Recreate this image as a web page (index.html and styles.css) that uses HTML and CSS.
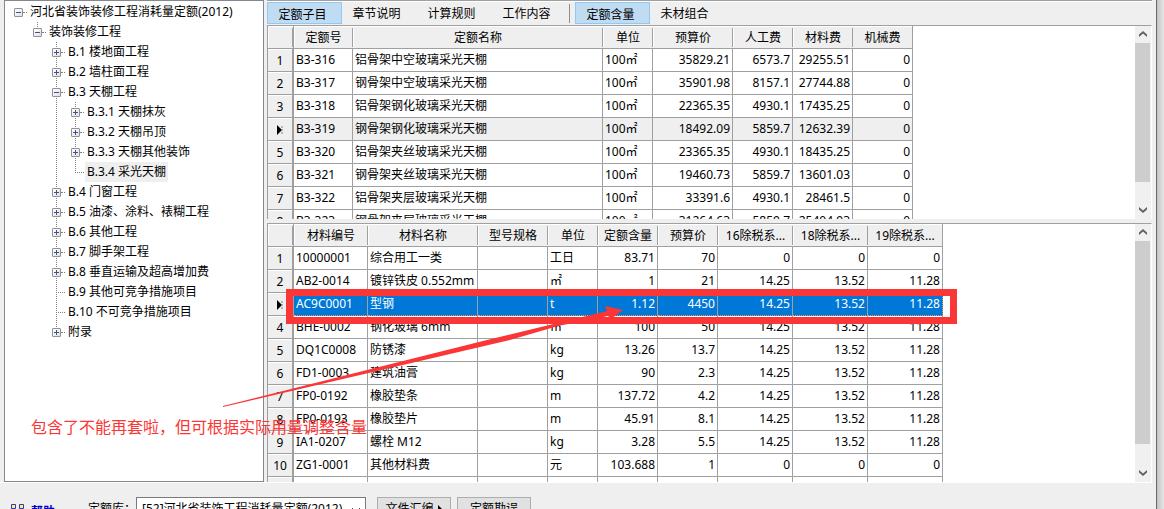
FILE: index.html
```html
<!DOCTYPE html>
<html lang="zh-CN">
<head>
<meta charset="utf-8">
<title>定额查询</title>
<link rel="stylesheet" href="styles.css">
</head>
<body>
<div class="window">
<div class="main">
<nav class="tree" aria-label="定额目录">
<ul class="branch root">
<li class="last"><div class="node"><button class="toggle minus" aria-label="折叠"></button><span class="name">河北省装饰装修工程消耗量定额(2012)</span></div>
<ul class="branch">
<li class="last"><div class="node"><button class="toggle minus" aria-label="折叠"></button><span class="name">装饰装修工程</span></div>
<ul class="branch">
<li><div class="node"><button class="toggle" aria-label="展开"></button><span class="name">B.1 楼地面工程</span></div></li>
<li><div class="node"><button class="toggle" aria-label="展开"></button><span class="name">B.2 墙柱面工程</span></div></li>
<li><div class="node"><button class="toggle minus" aria-label="折叠"></button><span class="name">B.3 天棚工程</span></div>
<ul class="branch">
<li><div class="node"><button class="toggle" aria-label="展开"></button><span class="name">B.3.1 天棚抹灰</span></div></li>
<li><div class="node"><button class="toggle" aria-label="展开"></button><span class="name">B.3.2 天棚吊顶</span></div></li>
<li><div class="node"><button class="toggle" aria-label="展开"></button><span class="name">B.3.3 天棚其他装饰</span></div></li>
<li class="last"><div class="node leaf"><span class="name current">B.3.4 采光天棚</span></div></li>
</ul></li>
<li><div class="node"><button class="toggle" aria-label="展开"></button><span class="name">B.4 门窗工程</span></div></li>
<li><div class="node"><button class="toggle" aria-label="展开"></button><span class="name">B.5 油漆、涂料、裱糊工程</span></div></li>
<li><div class="node"><button class="toggle" aria-label="展开"></button><span class="name">B.6 其他工程</span></div></li>
<li><div class="node"><button class="toggle" aria-label="展开"></button><span class="name">B.7 脚手架工程</span></div></li>
<li><div class="node"><button class="toggle" aria-label="展开"></button><span class="name">B.8 垂直运输及超高增加费</span></div></li>
<li><div class="node leaf"><span class="name">B.9 其他可竞争措施项目</span></div></li>
<li><div class="node leaf"><span class="name">B.10 不可竞争措施项目</span></div></li>
<li class="last"><div class="node"><button class="toggle" aria-label="展开"></button><span class="name">附录</span></div></li>
</ul></li>
</ul></li>
</ul>
</nav>
<section class="content">
<div class="tabs">
<button class="tab active">定额子目</button><button class="tab">章节说明</button><button class="tab">计算规则</button><button class="tab">工作内容</button><span class="separator"></span><button class="tab active">定额含量</button><button class="tab">未材组合</button>
</div>
<div class="panel upper">
<div class="viewport">
<table class="grid">
<colgroup><col class="w26"><col class="w59"><col class="w250"><col class="w50"><col class="w80"><col class="w60"><col class="w60"><col class="w60"></colgroup>
<thead><tr><th></th><th>定额号</th><th>定额名称</th><th>单位</th><th>预算价</th><th>人工费</th><th>材料费</th><th>机械费</th></tr></thead>
<tbody>
<tr><th>1</th><td>B3-316</td><td>铝骨架中空玻璃采光天棚</td><td>100㎡</td><td class="num">35829.21</td><td class="num">6573.7</td><td class="num">29255.51</td><td class="num">0</td></tr>
<tr><th>2</th><td>B3-317</td><td>钢骨架中空玻璃采光天棚</td><td>100㎡</td><td class="num">35901.98</td><td class="num">8157.1</td><td class="num">27744.88</td><td class="num">0</td></tr>
<tr><th>3</th><td>B3-318</td><td>铝骨架钢化玻璃采光天棚</td><td>100㎡</td><td class="num">22365.35</td><td class="num">4930.1</td><td class="num">17435.25</td><td class="num">0</td></tr>
<tr class="marked"><th><svg class="pointer" viewBox="0 0 6 10"><path d="M0 0 5 5 0 10Z"/><path class="ghost" d="M5 1V9"/></svg></th><td>B3-319</td><td>钢骨架钢化玻璃采光天棚</td><td>100㎡</td><td class="num">18492.09</td><td class="num">5859.7</td><td class="num">12632.39</td><td class="num">0</td></tr>
<tr><th>5</th><td>B3-320</td><td>铝骨架夹丝玻璃采光天棚</td><td>100㎡</td><td class="num">23365.35</td><td class="num">4930.1</td><td class="num">18435.25</td><td class="num">0</td></tr>
<tr><th>6</th><td>B3-321</td><td>钢骨架夹丝玻璃采光天棚</td><td>100㎡</td><td class="num">19460.73</td><td class="num">5859.7</td><td class="num">13601.03</td><td class="num">0</td></tr>
<tr><th>7</th><td>B3-322</td><td>铝骨架夹层玻璃采光天棚</td><td>100㎡</td><td class="num">33391.6</td><td class="num">4930.1</td><td class="num">28461.5</td><td class="num">0</td></tr>
<tr><th>8</th><td>B3-323</td><td>钢骨架夹层玻璃采光天棚</td><td>100㎡</td><td class="num">31264.63</td><td class="num">5859.7</td><td class="num">25404.93</td><td class="num">0</td></tr>
</tbody>
</table>
</div>
<div class="scrollbar"><svg class="arrow" viewBox="0 0 16 17"><path d="M4 11V8.500L8 5 12 8.500V11L8 7.500Z"/></svg><div class="track"><div class="thumb thumb-upper"></div></div><svg class="arrow" viewBox="0 0 16 17"><path d="M4 6V8.500L8 12 12 8.500V6L8 9.500Z"/></svg></div>
</div>
<div class="panel lower">
<div class="viewport">
<table class="grid">
<colgroup><col class="w26"><col class="w74"><col class="w110"><col class="w70"><col class="w50"><col class="w60"><col class="w60"><col class="w75"><col class="w75"><col class="w75"></colgroup>
<thead><tr><th></th><th>材料编号</th><th>材料名称</th><th>型号规格</th><th>单位</th><th>定额含量</th><th>预算价</th><th>16除税系...</th><th>18除税系...</th><th>19除税系...</th></tr></thead>
<tbody>
<tr><th>1</th><td>10000001</td><td>综合用工一类</td><td></td><td>工日</td><td class="num">83.71</td><td class="num">70</td><td class="num">0</td><td class="num">0</td><td class="num">0</td></tr>
<tr><th>2</th><td>AB2-0014</td><td>镀锌铁皮 0.552mm</td><td></td><td>㎡</td><td class="num">1</td><td class="num">21</td><td class="num">14.25</td><td class="num">13.52</td><td class="num">11.28</td></tr>
<tr class="selected"><th><svg class="pointer" viewBox="0 0 6 10"><path d="M0 0 5 5 0 10Z"/><path class="ghost" d="M5 1V9"/></svg></th><td>AC9C0001</td><td>型钢</td><td></td><td>t</td><td class="num">1.12</td><td class="num">4450</td><td class="num">14.25</td><td class="num">13.52</td><td class="num">11.28</td></tr>
<tr><th>4</th><td>BHE-0002</td><td>钢化玻璃 6mm</td><td></td><td>㎡</td><td class="num">100</td><td class="num">50</td><td class="num">14.25</td><td class="num">13.52</td><td class="num">11.28</td></tr>
<tr><th>5</th><td>DQ1C0008</td><td>防锈漆</td><td></td><td>kg</td><td class="num">13.26</td><td class="num">13.7</td><td class="num">14.25</td><td class="num">13.52</td><td class="num">11.28</td></tr>
<tr><th>6</th><td>FD1-0003</td><td>建筑油膏</td><td></td><td>kg</td><td class="num">90</td><td class="num">2.3</td><td class="num">14.25</td><td class="num">13.52</td><td class="num">11.28</td></tr>
<tr><th>7</th><td>FP0-0192</td><td>橡胶垫条</td><td></td><td>m</td><td class="num">137.72</td><td class="num">4.2</td><td class="num">14.25</td><td class="num">13.52</td><td class="num">11.28</td></tr>
<tr><th>8</th><td>FP0-0193</td><td>橡胶垫片</td><td></td><td>m</td><td class="num">45.91</td><td class="num">8.1</td><td class="num">14.25</td><td class="num">13.52</td><td class="num">11.28</td></tr>
<tr><th>9</th><td>IA1-0207</td><td>螺栓 M12</td><td></td><td>kg</td><td class="num">3.28</td><td class="num">5.5</td><td class="num">14.25</td><td class="num">13.52</td><td class="num">11.28</td></tr>
<tr><th>10</th><td>ZG1-0001</td><td>其他材料费</td><td></td><td>元</td><td class="num">103.688</td><td class="num">1</td><td class="num">0</td><td class="num">0</td><td class="num">0</td></tr>
<tr><th></th><td></td><td></td><td></td><td></td><td></td><td></td><td></td><td></td><td></td></tr>
</tbody>
</table>
</div>
<div class="scrollbar"><svg class="arrow" viewBox="0 0 16 17"><path d="M4 11V8.500L8 5 12 8.500V11L8 7.500Z"/></svg><div class="track"><div class="thumb thumb-lower"></div></div><svg class="arrow" viewBox="0 0 16 17"><path d="M4 6V8.500L8 12 12 8.500V6L8 9.500Z"/></svg></div>
</div>
</section>
</div>
<footer class="footer">
<a class="help" href="#"><svg class="help-icon" viewBox="0 0 15 15"><path class="dot" d="M2 2H6V6H2ZM10 2H14V6H10ZM2 10H6V14H2ZM10 10H14V14H10Z"/><path d="M1.500 1.500H5.500V5.500H1.500ZM9.500 1.500H13.500V5.500H9.500ZM1.500 9.500H5.500V13.500H1.500ZM9.500 9.500H13.500V13.500H9.500Z"/></svg>帮助</a>
<label class="library-label" for="library">定额库：</label>
<div class="combo"><select id="library"><option>[52]河北省装饰工程消耗量定额(2012)</option></select><svg class="chevron" viewBox="0 0 10 6"><path d="M1 1 5 5 9 1"/></svg></div>
<button class="command">文件汇编<svg class="more" viewBox="0 0 5 8"><path d="M0 0 4 4 0 8Z"/></svg></button>
<button class="command">定额勘误</button>
</footer>
<div class="highlight"></div>
<svg class="callout" viewBox="0 0 402 104"><path d="M0 100 264 34 384 5 382 0 400 4 388 13 385 10 335 20 287 34 0 101Z"/></svg>
<p class="note">包含了不能再套啦，但可根据实际用量调整含量</p>
</div>
</body>
</html>
```

FILE: styles.css
```css
* { box-sizing: border-box; }
body {
  margin: 0;
  overflow: hidden;
  background: #efefef;
  color: #000;
  font: 12px/20px "Noto Sans", "Noto Sans CJK SC", sans-serif;
}
button, select { font: inherit; color: inherit; }
button { margin: 0; padding: 0; border: 0; background: none; }

.window {
  position: relative;
  display: flex;
  flex-direction: column;
  height: 100vh;
  overflow: hidden;
  padding-right: 12px;
  background: linear-gradient(90deg, #696969 1px, #c4c4c4 1px, #e6e6e6 8px) right / 8px 100% no-repeat #efefef;
}
.main { display: flex; flex: 1; min-height: 0; gap: 3px; padding-left: 4px; }

/* Catalogue tree */
.tree {
  flex: 0 0 260px;
  overflow: hidden;
  padding: 1px 0 0 9px;
  border: 1px solid #828790;
  background: #fff;
}
.branch { margin: 0; padding: 0 0 0 19px; list-style: none; }
.branch.root { padding: 0; }
.branch li { background: repeating-linear-gradient(#808080 0 1px, #fff 1px 2px) 4px 0 / 1px 100% no-repeat; }
.branch li.last { background-size: 1px 10px; }
.root > li.last { background: none; }
.node { display: flex; align-items: center; height: 20px; }
.node::after { content: ""; order: 1; width: 4px; border-top: 1px dotted #808080; }
.node.leaf::after { width: 9px; margin-left: 4px; }
.name { order: 2; margin-left: 1px; padding: 0 2px; white-space: nowrap; }
.name.current { background: #efefef; }
.toggle {
  width: 9px;
  height: 9px;
  border: 1px solid #919191;
  border-radius: 1px;
  background:
    linear-gradient(#3c539c, #3c539c) center / 5px 1px no-repeat,
    linear-gradient(#3c539c, #3c539c) center / 1px 5px no-repeat,
    linear-gradient(135deg, #fff, #e0e0e0);
}
.toggle.minus {
  background:
    linear-gradient(#3c539c, #3c539c) center / 5px 1px no-repeat,
    linear-gradient(135deg, #fff, #e0e0e0);
}

/* Tabs */
.content { display: flex; flex: 1; flex-direction: column; min-width: 0; }
.tabs { display: flex; flex: 0 0 25px; padding: 1px 0; border-top: 1px solid #a0a0a0; background: linear-gradient(#fff, #fff) top / 100% 1px no-repeat; }
.tab { width: 75px; height: 22px; padding: 2px 6px 0 0; line-height: 20px; }
.tab.active { padding-right: 4px; border: 1px solid #90c8f6; background: #c0dcf3; }
.separator { width: 1px; height: 19px; margin: 2px 5px 0 2px; background: #8d8d8d; }

/* Data panels */
.panel { display: flex; min-height: 0; border-top: 1px solid #a0a0a0; border-right: 1px solid #fff; background: #fff; }
.upper { flex: 194 1 0; margin-bottom: 4px; }
.lower { flex: 259 1 0; }
.viewport { flex: 1; min-width: 0; overflow: hidden; border-left: 1px solid #a0a0a0; }
.grid { table-layout: fixed; width: 0; border-spacing: 0; }
.w26 { width: 26px; }
.w50 { width: 50px; }
.w59 { width: 59px; }
.w60 { width: 60px; }
.w70 { width: 70px; }
.w74 { width: 74px; }
.w75 { width: 75px; }
.w80 { width: 80px; }
.w110 { width: 110px; }
.w250 { width: 250px; }
.grid th, .grid td {
  height: 23px;
  overflow: hidden;
  padding: 0 2px;
  border-right: 1px solid #a0a0a0;
  border-bottom: 1px solid #a0a0a0;
  font-weight: normal;
  line-height: 20px;
  text-align: left;
  white-space: nowrap;
}
.grid td.num { text-align: right; }
.grid thead th {
  padding: 2px 0 0;
  border-right: 0;
  background:
    linear-gradient(#a0a0a0, #a0a0a0) right center / 1px 19px no-repeat,
    linear-gradient(#fff, #fff) left center / 1px 19px no-repeat,
    linear-gradient(#fff, #fff) top / 100% 1px no-repeat #efefef;
  text-align: center;
}
.grid thead th:last-child { border-right: 1px solid #a0a0a0; background: linear-gradient(#fff, #fff) top / 100% 1px no-repeat #efefef; }
.grid tbody th {
  padding-top: 2px;
  border-right-width: 2px;
  background: linear-gradient(#fff, #fff) top / 100% 1px no-repeat #efefef;
  text-align: center;
}
.grid thead th:first-child { border-right: 1px solid #a0a0a0; }
.marked td { background: #efefef; }
.grid .selected td { border-bottom: 1px dotted #e59a55; background: #0078d7; color: #fff; }
.grid .selected td:last-child { border-right: 1px dotted #e59a55; }
.pointer { display: block; width: 6px; height: 10px; margin: 0 auto; }
.ghost { fill: none; stroke: #808080; stroke-dasharray: 2 1; }

/* Scrollbars */
.scrollbar { display: flex; flex: 0 0 16px; flex-direction: column; padding-bottom: 1px; background: #f0f0f0; }
.arrow { flex: 0 0 17px; width: 16px; height: 17px; fill: #606060; }
.track { flex: 1; }
.thumb { width: 15px; background: #cdcdcd; }
.thumb-upper { height: 88%; }
.thumb-lower { height: 91%; }

/* Footer */
.footer { display: flex; flex: 0 0 27px; align-items: flex-start; min-height: 0; height: 27px; padding: 14px 0 0 10px; border-top: 1px solid #fff; }
.help { display: flex; gap: 6px; width: 78px; padding-top: 6px; color: #0000c8; font-weight: bold; line-height: 18px; text-decoration: none; }
.help-icon { width: 15px; height: 15px; fill: none; stroke: #3434b4; }
.help-icon .dot { fill: #ffee70; stroke: none; }
.library-label { width: 48px; padding-top: 2px; }
.combo { position: relative; flex: 0 0 230px; }
.combo select { display: block; width: 100%; height: 24px; padding: 0 20px 0 5px; border: 1px solid #7a7a7a; border-radius: 0; background: #fff; appearance: none; }
.chevron { position: absolute; top: 10px; right: 5px; width: 10px; height: 6px; fill: none; stroke: #505050; pointer-events: none; }
.command { display: flex; align-items: center; justify-content: center; width: 74px; height: 24px; border: 1px solid #adadad; background: #e1e1e1; }
.combo + .command { margin: 0 6px 0 11px; }
.more { width: 5px; height: 8px; margin-left: 4px; }

/* Annotation drawn over the window */
.highlight { position: absolute; top: 289px; left: 286px; width: 671px; height: 35px; border: 7px solid #fb3636; }
.callout { position: absolute; top: 306px; left: 223px; width: 402px; height: 104px; fill: #fb3636; }
.note { position: absolute; top: 415px; left: 31px; margin: 0; color: #fb3636; font-size: 16px; line-height: 24px; white-space: nowrap; }
```
